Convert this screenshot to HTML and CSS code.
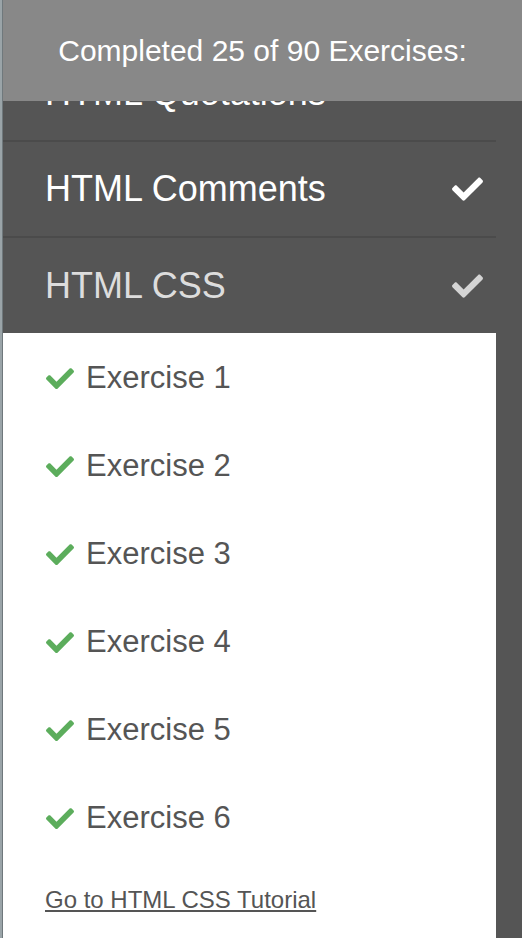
FILE: index.html
```html
<!DOCTYPE html>
<html>
<head>
<meta charset="utf-8">
<link rel="stylesheet" href="styles.css">
</head>
<body>
<div class="page">
  <div class="edge"></div>
  <div class="sidebar">
    <div class="progress">Completed 25 of 90 Exercises:</div>
    <div class="chapters">
      <div class="chapter"><span>HTML Quotations</span></div>
      <div class="chapter done"><span>HTML Comments</span>
        <svg class="tick" viewBox="0 64 512 380"><path d="M173.898 439.404l-166.4-166.4c-9.997-9.997-9.997-26.206 0-36.204l36.203-36.204c9.997-9.998 26.207-9.998 36.204 0L192 312.69 432.095 72.596c9.997-9.997 26.207-9.997 36.204 0l36.203 36.204c9.997 9.997 9.997 26.206 0 36.204l-294.4 294.401c-9.998 9.997-26.207 9.997-36.204-.001z"/></svg>
      </div>
      <div class="chapter open"><span>HTML CSS</span>
        <svg class="tick" viewBox="0 64 512 380"><path d="M173.898 439.404l-166.4-166.4c-9.997-9.997-9.997-26.206 0-36.204l36.203-36.204c9.997-9.998 26.207-9.998 36.204 0L192 312.69 432.095 72.596c9.997-9.997 26.207-9.997 36.204 0l36.203 36.204c9.997 9.997 9.997 26.206 0 36.204l-294.4 294.401c-9.998 9.997-26.207 9.997-36.204-.001z"/></svg>
      </div>
      <div class="exercises">
        <div class="exercise"><svg class="ok" viewBox="0 64 512 380"><path d="M173.898 439.404l-166.4-166.4c-9.997-9.997-9.997-26.206 0-36.204l36.203-36.204c9.997-9.998 26.207-9.998 36.204 0L192 312.69 432.095 72.596c9.997-9.997 26.207-9.997 36.204 0l36.203 36.204c9.997 9.997 9.997 26.206 0 36.204l-294.4 294.401c-9.998 9.997-26.207 9.997-36.204-.001z"/></svg><span>Exercise 1</span></div>
        <div class="exercise"><svg class="ok" viewBox="0 64 512 380"><path d="M173.898 439.404l-166.4-166.4c-9.997-9.997-9.997-26.206 0-36.204l36.203-36.204c9.997-9.998 26.207-9.998 36.204 0L192 312.69 432.095 72.596c9.997-9.997 26.207-9.997 36.204 0l36.203 36.204c9.997 9.997 9.997 26.206 0 36.204l-294.4 294.401c-9.998 9.997-26.207 9.997-36.204-.001z"/></svg><span>Exercise 2</span></div>
        <div class="exercise"><svg class="ok" viewBox="0 64 512 380"><path d="M173.898 439.404l-166.4-166.4c-9.997-9.997-9.997-26.206 0-36.204l36.203-36.204c9.997-9.998 26.207-9.998 36.204 0L192 312.69 432.095 72.596c9.997-9.997 26.207-9.997 36.204 0l36.203 36.204c9.997 9.997 9.997 26.206 0 36.204l-294.4 294.401c-9.998 9.997-26.207 9.997-36.204-.001z"/></svg><span>Exercise 3</span></div>
        <div class="exercise"><svg class="ok" viewBox="0 64 512 380"><path d="M173.898 439.404l-166.4-166.4c-9.997-9.997-9.997-26.206 0-36.204l36.203-36.204c9.997-9.998 26.207-9.998 36.204 0L192 312.69 432.095 72.596c9.997-9.997 26.207-9.997 36.204 0l36.203 36.204c9.997 9.997 9.997 26.206 0 36.204l-294.4 294.401c-9.998 9.997-26.207 9.997-36.204-.001z"/></svg><span>Exercise 4</span></div>
        <div class="exercise"><svg class="ok" viewBox="0 64 512 380"><path d="M173.898 439.404l-166.4-166.4c-9.997-9.997-9.997-26.206 0-36.204l36.203-36.204c9.997-9.998 26.207-9.998 36.204 0L192 312.69 432.095 72.596c9.997-9.997 26.207-9.997 36.204 0l36.203 36.204c9.997 9.997 9.997 26.206 0 36.204l-294.4 294.401c-9.998 9.997-26.207 9.997-36.204-.001z"/></svg><span>Exercise 5</span></div>
        <div class="exercise"><svg class="ok" viewBox="0 64 512 380"><path d="M173.898 439.404l-166.4-166.4c-9.997-9.997-9.997-26.206 0-36.204l36.203-36.204c9.997-9.998 26.207-9.998 36.204 0L192 312.69 432.095 72.596c9.997-9.997 26.207-9.997 36.204 0l36.203 36.204c9.997 9.997 9.997 26.206 0 36.204l-294.4 294.401c-9.998 9.997-26.207 9.997-36.204-.001z"/></svg><span>Exercise 6</span></div>
        <a class="tutorial" href="#">Go to HTML CSS Tutorial</a>
      </div>
    </div>
  </div>
</div>
</body>
</html>
```

FILE: styles.css
```css
html, body {
  margin: 0;
  padding: 0;
  height: 100%;
  overflow: hidden;
}
body {
  background: #555555;
  font-family: "Liberation Sans", Arial, sans-serif;
}
.page {
  display: flex;
  height: 938px;
}
.edge {
  width: 2px;
  flex: none;
  background: #9aa4a8;
  border-right: 1px solid #6f787c;
}
.sidebar {
  position: relative;
  flex: 1;
  overflow: hidden;
}
.progress {
  position: absolute;
  top: 0;
  left: 0;
  right: 0;
  height: 101px;
  background: #888888;
  color: #ffffff;
  font-size: 30px;
  display: flex;
  align-items: center;
  justify-content: center;
  z-index: 2;
}
.chapters {
  padding-top: 46px;
  margin-right: 26px;
}
.chapter {
  height: 94px;
  border-bottom: 2px solid #4b4b4b;
  display: flex;
  align-items: center;
  justify-content: space-between;
  padding: 0 13px 0 42px;
  font-size: 36px;
  color: #ffffff;
}
.chapter.open {
  border-bottom: none;
  height: 95px;
  color: #dddddd;
}
.tick {
  width: 31px;
  height: 24px;
  fill: #ffffff;
}
.chapter.open .tick {
  fill: #d4d4d4;
}
.exercises {
  background: #ffffff;
  padding-top: 1px;
  height: 620px;
}
.exercise {
  height: 88px;
  display: flex;
  align-items: center;
  padding-left: 43px;
  gap: 12px;
  font-size: 31px;
  color: #555555;
}
.ok {
  width: 28px;
  height: 21px;
  fill: #5cad5c;
}
.tutorial {
  display: block;
  margin: 24px 0 0 42px;
  font-size: 24px;
  line-height: 28px;
  color: #555555;
}
```
